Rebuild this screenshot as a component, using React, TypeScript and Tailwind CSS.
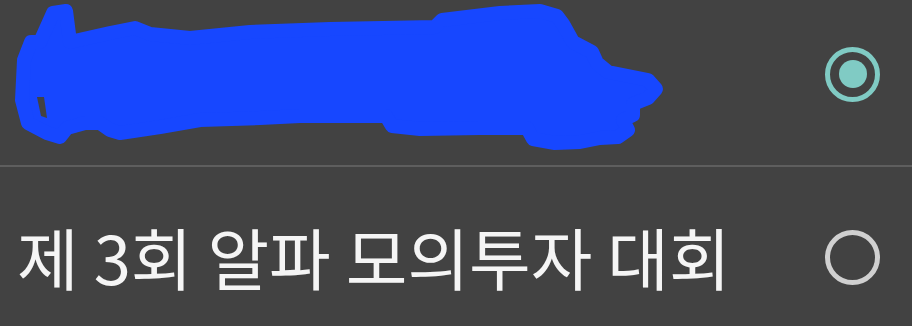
const Radio = ({ checked }: { checked: boolean }) =>
    checked ? (
        <div className="w-[55px] h-[55px] rounded-full border-[5px] border-[#80cbc4] flex items-center justify-center">
            <div className="w-[28px] h-[28px] rounded-full bg-[#80cbc4]" />
        </div>
    ) : (
        <div className="w-[55px] h-[55px] rounded-full border-[5px] border-[#d0d0d0]" />
    )

const Scribble = () => (
    <svg width="670" height="155" viewBox="0 0 670 155" className="shrink-0">
        <path
            d="M40 42 L53 13 L66 11 L70 42 L110 33 L135 28 L150 34 L190 38 L250 32 L330 29 L435 27 L442 20 L500 13 L540 11 L557 16 L563 24 L573 42 L592 52 L597 63 L608 72 L648 80 L656 89 L648 98 L633 104 L633 115 L623 120 L628 130 L618 137 L600 138 L580 142 L555 143 L533 139 L527 128 L480 128 L420 129 L392 126 L386 116 L300 116 L260 118 L200 120 L160 127 L120 133 L110 130 L100 123 L85 123 L67 128 L60 137 L47 133 L28 123 L22 100 L24 60 L31 42 Z"
            fill="#1747ff"
            stroke="#1747ff"
            strokeWidth="14"
            strokeLinejoin="round"
        />
        <path d="M37 97 L44 97 L47 118 L41 116 Z" fill="#424242" />
    </svg>
)

export default function App() {
    return (
        <div className="w-[912px] h-[326px] overflow-hidden bg-[#424242] font-['Noto_Sans_CJK_KR',sans-serif]">
            <div className="h-[165px] pb-[17px] flex items-center justify-between pr-[32px]">
                <div className="self-start">
                    <Scribble />
                </div>
                <Radio checked />
            </div>
            <div className="h-[2px] bg-[#5e5e5e]" />
            <div className="h-[180px] flex items-center justify-between pl-[17px] pr-[32px]">
                <p className="text-[67px] leading-none text-[#f5f5f5] pb-[4px]">제 3회 알파 모의투자 대회</p>
                <Radio checked={false} />
            </div>
        </div>
    )
}
